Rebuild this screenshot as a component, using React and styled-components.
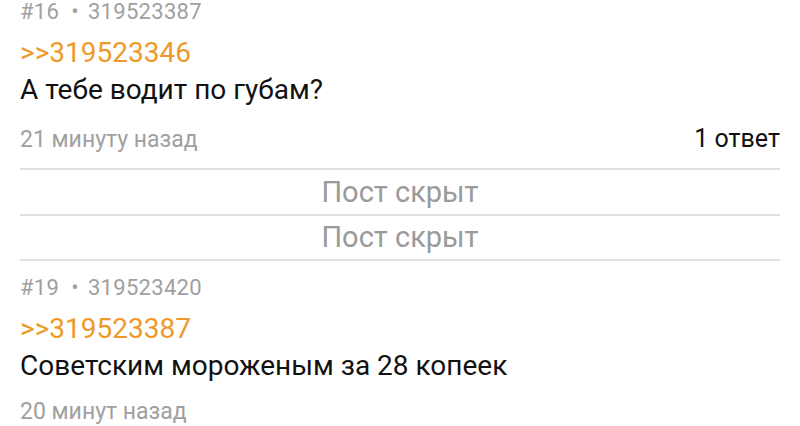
import React from "react"
import styled, { createGlobalStyle } from "styled-components"

const Global = createGlobalStyle`
  html, body {
    margin: 0;
    padding: 0;
    background: #fff;
    font-family: Roboto, "Noto Sans", sans-serif;
  }
`

const Feed = styled.div`
  display: flex;
  flex-direction: column;
  padding: 0 20px;
`

const Post = styled.div`
  display: flex;
  flex-direction: column;
  padding-bottom: ${p => p.last ? 0 : 14}px;
`

const Meta = styled.div`
  font-size: 22px;
  line-height: 24px;
  color: #a0a0a0;
  letter-spacing: 0.3px;
  white-space: nowrap;
`

const Dot = styled.span`
  margin: 0 9px 0 12px;
`

const ReplyLink = styled.div`
  margin-top: 12px;
  font-size: 28px;
  line-height: 34px;
  color: #ee9a28;
`

const Body = styled.div`
  margin-top: 3px;
  font-size: 28px;
  line-height: 34px;
  color: #111;
`

const Footer = styled.div`
  margin-top: ${p => p.tight ? 15 : 18}px;
  display: flex;
  justify-content: space-between;
  align-items: baseline;
`

const Time = styled.span`
  font-size: 23px;
  line-height: 28px;
  color: #a0a0a0;
`

const Replies = styled.span`
  font-size: 25px;
  line-height: 28px;
  color: #111;
`

const HiddenGroup = styled.div`
  display: flex;
  flex-direction: column;
  margin-bottom: 15px;
`

const Hidden = styled.div`
  border-top: 2px solid #e2e2e2;
  text-align: center;
  font-size: 29px;
  line-height: 44px;
  color: #9a9a9a;
  &:last-child {
    border-bottom: 2px solid #e2e2e2;
    line-height: 43px;
  }
`

export default function App() {
  return (
    <>
      <Global />
      <Feed>
        <Post>
          <Meta>#16<Dot>•</Dot>319523387</Meta>
          <ReplyLink>&gt;&gt;319523346</ReplyLink>
          <Body>А тебе водит по губам?</Body>
          <Footer>
            <Time>21 минуту назад</Time>
            <Replies>1 ответ</Replies>
          </Footer>
        </Post>
        <HiddenGroup>
          <Hidden>Пост скрыт</Hidden>
          <Hidden>Пост скрыт</Hidden>
        </HiddenGroup>
        <Post last>
          <Meta>#19<Dot>•</Dot>319523420</Meta>
          <ReplyLink>&gt;&gt;319523387</ReplyLink>
          <Body>Советским мороженым за 28 копеек</Body>
          <Footer tight>
            <Time>20 минут назад</Time>
          </Footer>
        </Post>
      </Feed>
    </>
  )
}
